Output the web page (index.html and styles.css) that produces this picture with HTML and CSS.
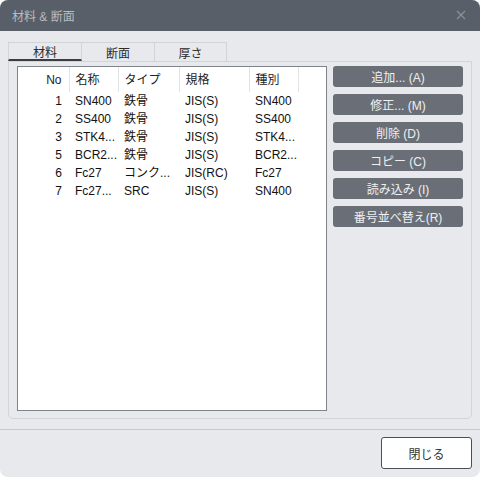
FILE: index.html
```html
<!DOCTYPE html>
<html lang="ja">

<head>
    <meta charset="UTF-8">
    <title>材料 &amp; 断面</title>
    <link rel="stylesheet" href="styles.css">
</head>

<body>

    <div class="window">
        <div class="titlebar">
            <span class="title">材料 &amp; 断面</span>
            <svg class="close-x" width="10" height="10" viewBox="0 0 10 10">
                <path d="M1 1 L9 9 M9 1 L1 9" stroke="#8d9299" stroke-width="1.1" fill="none" />
            </svg>
        </div>

        <div class="content">
            <div class="tabs">
                <div class="tab active">材料</div>
                <div class="tab">断面</div>
                <div class="tab">厚さ</div>
            </div>

            <div class="panel">
                <div class="list">
                    <table>
                        <thead>
                            <tr>
                                <th class="no">No</th>
                                <th class="c-name">名称</th>
                                <th class="c-type">タイプ</th>
                                <th class="c-std">規格</th>
                                <th class="c-kind">種別</th>
                                <th class="c-rest"></th>
                            </tr>
                        </thead>
                        <tbody>
                            <tr><td class="no">1</td><td>SN400</td><td>鉄骨</td><td>JIS(S)</td><td>SN400</td><td></td></tr>
                            <tr><td class="no">2</td><td>SS400</td><td>鉄骨</td><td>JIS(S)</td><td>SS400</td><td></td></tr>
                            <tr><td class="no">3</td><td>STK4...</td><td>鉄骨</td><td>JIS(S)</td><td>STK4...</td><td></td></tr>
                            <tr><td class="no">5</td><td>BCR2...</td><td>鉄骨</td><td>JIS(S)</td><td>BCR2...</td><td></td></tr>
                            <tr><td class="no">6</td><td>Fc27</td><td>コンク...</td><td>JIS(RC)</td><td>Fc27</td><td></td></tr>
                            <tr><td class="no">7</td><td>Fc27...</td><td>SRC</td><td>JIS(S)</td><td>SN400</td><td></td></tr>
                        </tbody>
                    </table>
                </div>

                <div class="actions">
                    <button>追加... (A)</button>
                    <button>修正... (M)</button>
                    <button>削除 (D)</button>
                    <button>コピー (C)</button>
                    <button>読み込み (I)</button>
                    <button>番号並べ替え(R)</button>
                </div>
            </div>
        </div>

        <div class="footer">
            <button class="close-btn">閉じる</button>
        </div>
    </div>

</body>

</html>
```

FILE: styles.css
```css
* {
    box-sizing: border-box;
    font-family: 'Liberation Sans', 'Noto Sans CJK JP', sans-serif;
}

body {
    margin: 0;
    background: #ffffff;
}

.window {
    width: 480px;
    height: 477px;
    background: #e8e9ed;
    border-radius: 8px;
    overflow: hidden;
    display: flex;
    flex-direction: column;
}

.titlebar {
    height: 31px;
    background: #585f68;
    display: flex;
    align-items: center;
    justify-content: space-between;
    padding: 0 14px 0 12px;
}

.title {
    color: #b8bcc1;
    font-size: 12px;
}

.close-x {
    margin-top: -1px;
}

.content {
    padding: 11px 8px 0 8px;
}

/* tabs */

.tabs {
    display: flex;
    height: 19px;
}

.tab {
    width: 73px;
    border: 1px solid #d2d4d8;
    border-bottom: none;
    border-left: none;
    font-size: 12px;
    color: #2b2b2b;
    display: flex;
    align-items: center;
    justify-content: center;
}

.tab:first-child {
    width: 74px;
    border-left: 1px solid #d2d4d8;
}

.tab:last-child {
    width: 72px;
}

.tab.active {
    border-bottom: 2px solid #3a3e44;
    padding-top: 1px;
}

.panel {
    height: 358px;
    border: 1px solid #d2d4d8;
    border-radius: 0 0 5px 5px;
    padding: 4px 7px 0 8px;
    display: flex;
    gap: 6px;
}

/* list */

.list {
    width: 310px;
    height: 345px;
    background: #fff;
    border: 1px solid #7f848b;
}

table {
    border-collapse: collapse;
    table-layout: fixed;
    width: 100%;
    font-size: 12px;
    line-height: 14px;
}

th {
    height: 25px;
    font-weight: normal;
    color: #222;
    text-align: left;
    padding: 0 6px;
    border-right: 1px solid #e3e3e3;
}

th.c-rest {
    border-right: none;
}

td {
    height: 18px;
    padding: 0 6px;
    color: #111;
    white-space: nowrap;
    overflow: hidden;
}

.no {
    width: 51px;
    text-align: right;
    padding-right: 7px;
}

.c-name {
    width: 49px;
}

.c-type {
    width: 61px;
}

.c-std {
    width: 70px;
}

.c-kind {
    width: 49px;
}

/* side buttons */

.actions {
    display: flex;
    flex-direction: column;
    gap: 7px;
}

.actions button {
    width: 130px;
    height: 21px;
    border: none;
    border-radius: 3px;
    background: #6a6f77;
    color: #eef0f2;
    font-size: 12px;
    padding: 0;
}

/* footer */

.footer {
    margin-top: 10px;
    border-top: 1px solid #c6c8cc;
    display: flex;
    justify-content: flex-end;
    padding: 7px 8px 0 0;
}

.close-btn {
    width: 91px;
    height: 32px;
    background: #fff;
    border: 1px solid #4b5057;
    border-radius: 3px;
    font-size: 12px;
    color: #333;
}
```
